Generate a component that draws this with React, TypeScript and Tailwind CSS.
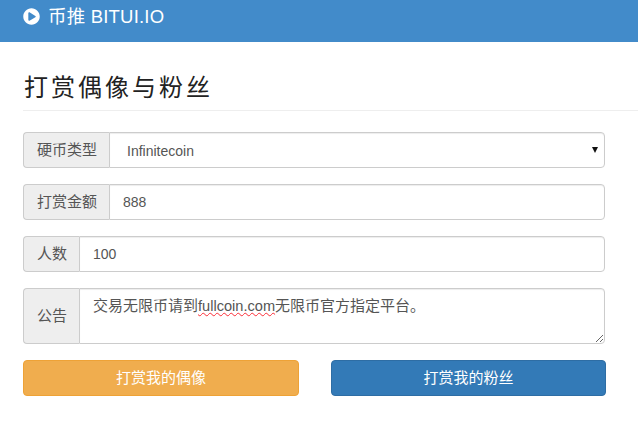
import React from 'react';
import { FaPlayCircle } from 'react-icons/fa';

const font = "font-['Liberation_Sans','Noto_Sans_CJK_SC',sans-serif]";

function Addon({ children, width }: { children: React.ReactNode; width: string }) {
  return (
    <span className={`${width} flex shrink-0 items-center justify-center rounded-l-[4px] border border-r-0 border-[#ccc] bg-[#eee] pl-px text-[15px] text-[#555]`}>
      {children}
    </span>
  );
}

const fieldClass =
  'h-full w-full min-w-0 flex-1 rounded-r-[4px] border border-[#ccc] bg-white pl-[13px] pr-3 text-sm text-[#555] shadow-[inset_0_1px_1px_rgba(0,0,0,0.075)] outline-none';

export default function App() {
  return (
    <div className={`${font} h-[431px] w-[638px] overflow-hidden bg-white`}>
      <header className="flex h-[42px] items-start gap-2 bg-[#428bca] pl-[23px] pt-[5px] text-white">
        <FaPlayCircle className="mt-[3px]" size={17} />
        <span className="text-[18.5px] leading-[24px] tracking-[0.2px]">币推 BITUI.IO</span>
      </header>

      <div className="ml-[23px] mt-[29px] flex h-[40px] items-start border-b border-[#eee]">
        <h3 className="pl-px text-2xl font-normal leading-[33px] tracking-[3px] text-[#222]">打赏偶像与粉丝</h3>
      </div>

      <form className="mt-[21px] flex w-[582px] flex-col gap-4 pl-[23px] box-content">
        <div className="flex h-9 w-[582px]">
          <Addon width="w-[86px]">硬币类型</Addon>
          <div className="relative min-w-0 flex-1">
            <select defaultValue="Infinitecoin" className={`${fieldClass} appearance-none pb-0 !pl-[17px] pt-px`}>
              <option>Infinitecoin</option>
            </select>
            <svg className="absolute right-[7px] top-[15px] h-[6px] w-[6px]" viewBox="0 0 6 6">
              <path d="M0 0H6L3 6Z" fill="#111" />
            </svg>
          </div>
        </div>
        <div className="flex h-9 w-[582px]">
          <Addon width="w-[86px]">打赏金额</Addon>
          <input defaultValue="888" className={fieldClass} />
        </div>
        <div className="flex h-9 w-[582px]">
          <Addon width="w-[56px]">人数</Addon>
          <input defaultValue="100" className={fieldClass} />
        </div>
        <div className="flex h-14 w-[582px]">
          <Addon width="w-[56px]">公告</Addon>
          <div className="h-14 min-w-0 flex-1 resize-y overflow-auto rounded-r-[4px] border border-[#ccc] bg-white pb-[6px] pl-[13px] pr-3 pt-[7px] text-[15px] leading-5 text-[#555] shadow-[inset_0_1px_1px_rgba(0,0,0,0.075)]">
            交易无限币请到<span className="text-[14.6px] underline decoration-red-500 decoration-wavy decoration-1">fullcoin.com</span>无限币官方指定平台。
          </div>
        </div>
        <div className="flex w-[583px] justify-between">
          <button type="button" className="h-9 w-[276px] rounded-[4px] border border-[#eea236] bg-[#f0ad4e] text-[15px] text-white">
            打赏我的偶像
          </button>
          <button type="button" className="h-9 w-[275px] rounded-[4px] border border-[#2e6da4] bg-[#337ab7] text-[15px] text-white">
            打赏我的粉丝
          </button>
        </div>
      </form>
    </div>
  );
}
